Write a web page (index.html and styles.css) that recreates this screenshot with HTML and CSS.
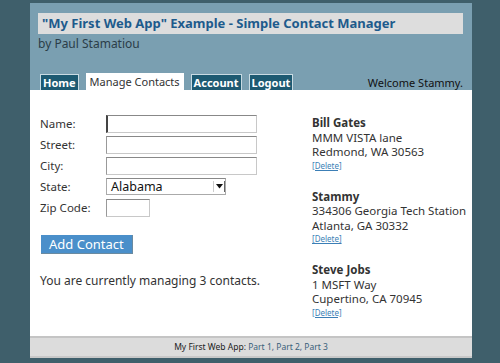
FILE: index.html
```html
<!DOCTYPE html>
<html>
<head>
<meta charset="utf-8">
<link rel="stylesheet" href="styles.css">
</head>
<body>
<div class="page">
  <div class="header">
    <div class="title">"My First Web App" Example - Simple Contact Manager</div>
    <div class="byline">by Paul Stamatiou</div>
    <div class="nav">
      <a class="tab">Home</a>
      <a class="tab current">Manage Contacts</a>
      <a class="tab">Account</a>
      <a class="tab">Logout</a>
      <span class="welcome">Welcome Stammy.</span>
    </div>
  </div>
  <div class="content">
    <div class="formcol">
      <div class="form">
        <label>Name:</label><span class="field"><span class="input wide focus"></span></span>
        <label>Street:</label><span class="field"><span class="input wide"></span></span>
        <label>City:</label><span class="field"><span class="input wide"></span></span>
        <label>State:</label><span class="field"><span class="select">Alabama<span class="arrow"><svg width="7" height="5" viewBox="0 0 7 5"><path d="M0 0H7L3.5 4.5Z" fill="#111"/></svg></span></span></span>
        <label>Zip Code:</label><span class="field"><span class="input zip"></span></span>
      </div>
      <div class="button">Add Contact</div>
      <p class="count">You are currently managing 3 contacts.</p>
    </div>
    <div class="contacts">
      <div class="contact">
        <div class="name">Bill Gates</div>
        <div>MMM VISTA lane</div>
        <div>Redmond, WA 30563</div>
        <a class="del">[Delete]</a>
      </div>
      <div class="contact">
        <div class="name">Stammy</div>
        <div>334306 Georgia Tech Station</div>
        <div>Atlanta, GA 30332</div>
        <a class="del">[Delete]</a>
      </div>
      <div class="contact">
        <div class="name">Steve Jobs</div>
        <div>1 MSFT Way</div>
        <div>Cupertino, CA 70945</div>
        <a class="del">[Delete]</a>
      </div>
    </div>
  </div>
  <div class="footer">My First Web App: <span class="parts">Part 1, Part 2, Part 3</span></div>
</div>
</body>
</html>
```
FILE: styles.css
```css
html, body {
  margin: 0;
  padding: 0;
  background: #3f5f6b;
  font-family: "Noto Sans", "Open Sans", sans-serif;
  color: #222;
}
.page {
  width: 442px;
  margin: 3px 0 0 30px;
}
.header {
  background: #7a9fb1;
  padding: 10px 9px 0 8px;
}
.title {
  background: #dddddd;
  color: #1d5b8c;
  font-weight: bold;
  font-size: 13px;
  height: 21px;
  line-height: 21px;
  padding-left: 4px;
  white-space: nowrap;
}
.byline {
  font-size: 12px;
  line-height: 16px;
  color: #2b3d48;
  margin-top: 2px;
}
.nav {
  display: flex;
  align-items: flex-end;
  margin-top: 21px;
  height: 17px;
  padding-left: 2px;
}
.tab {
  display: block;
  background: #1d5a72;
  color: #fff;
  font-weight: bold;
  font-size: 11px;
  border: 1px solid #c9dbe3;
  border-bottom: none;
  height: 15px;
  line-height: 15px;
  padding: 0 2px;
  margin-right: 7px;
}
.tab.current {
  background: #fff;
  color: #333;
  font-weight: normal;
  border: none;
  height: 17px;
  line-height: 18px;
  padding: 0 4px;
}
.welcome {
  margin-left: auto;
  font-size: 11px;
  color: #111;
  line-height: 15px;
}
.content {
  background: #fff;
  display: flex;
  height: 246px;
  padding: 0 10px;
}
.formcol {
  width: 272px;
  flex-shrink: 0;
  padding-top: 25px;
}
.form {
  display: grid;
  grid-template-columns: 66px 1fr;
  row-gap: 3px;
  font-size: 11.5px;
  color: #333;
}
.form label {
  line-height: 18px;
}
.field {
  display: block;
  height: 18px;
}
.input {
  display: block;
  height: 16px;
  border: 1px solid #c8c8c8;
  border-top-color: #888;
  border-left-color: #999;
  background: #fff;
}
.input.wide { width: 149px; }
.input.zip { width: 42px; }
.input.focus { border-left: 2px solid #444; width: 148px; }
.select {
  display: flex;
  align-items: center;
  width: 114px;
  height: 15px;
  border: 1px solid #aaa;
  border-top-color: #888;
  padding-left: 4px;
  font-size: 12.5px;
  color: #111;
}
.arrow {
  margin-left: auto;
  width: 10px;
  height: 11px;
  border-left: 1px solid #ccc;
  border-right: 1px solid #666;
  display: flex;
  align-items: center;
  justify-content: center;
}
.button {
  display: inline-block;
  margin: 18px 0 0 1px;
  background: #4a8fca;
  color: #fff;
  font-size: 13px;
  height: 18px;
  line-height: 18px;
  padding: 0 8px;
  border-right: 1px solid #6a8aa0;
  border-bottom: 1px solid #6a8aa0;
}
.count {
  margin: 18px 0 0;
  font-size: 12px;
  color: #333;
}
.contacts {
  padding-top: 26px;
  font-size: 11.5px;
  color: #333;
  line-height: 14.5px;
  white-space: nowrap;
}
.contact {
  margin-bottom: 19px;
}
.contact .name {
  font-weight: bold;
}
.del {
  display: block;
  font-size: 8px;
  line-height: 11px;
  color: #3c7fb6;
  text-decoration: underline;
}
.footer {
  background: #dcdcdc;
  border-top: 2px solid #c4c4c4;
  border-bottom: 2px solid #c8c8c8;
  height: 18px;
  line-height: 18px;
  text-align: center;
  font-size: 8.5px;
  color: #222;
}
.parts {
  color: #3a5f7a;
}
```
